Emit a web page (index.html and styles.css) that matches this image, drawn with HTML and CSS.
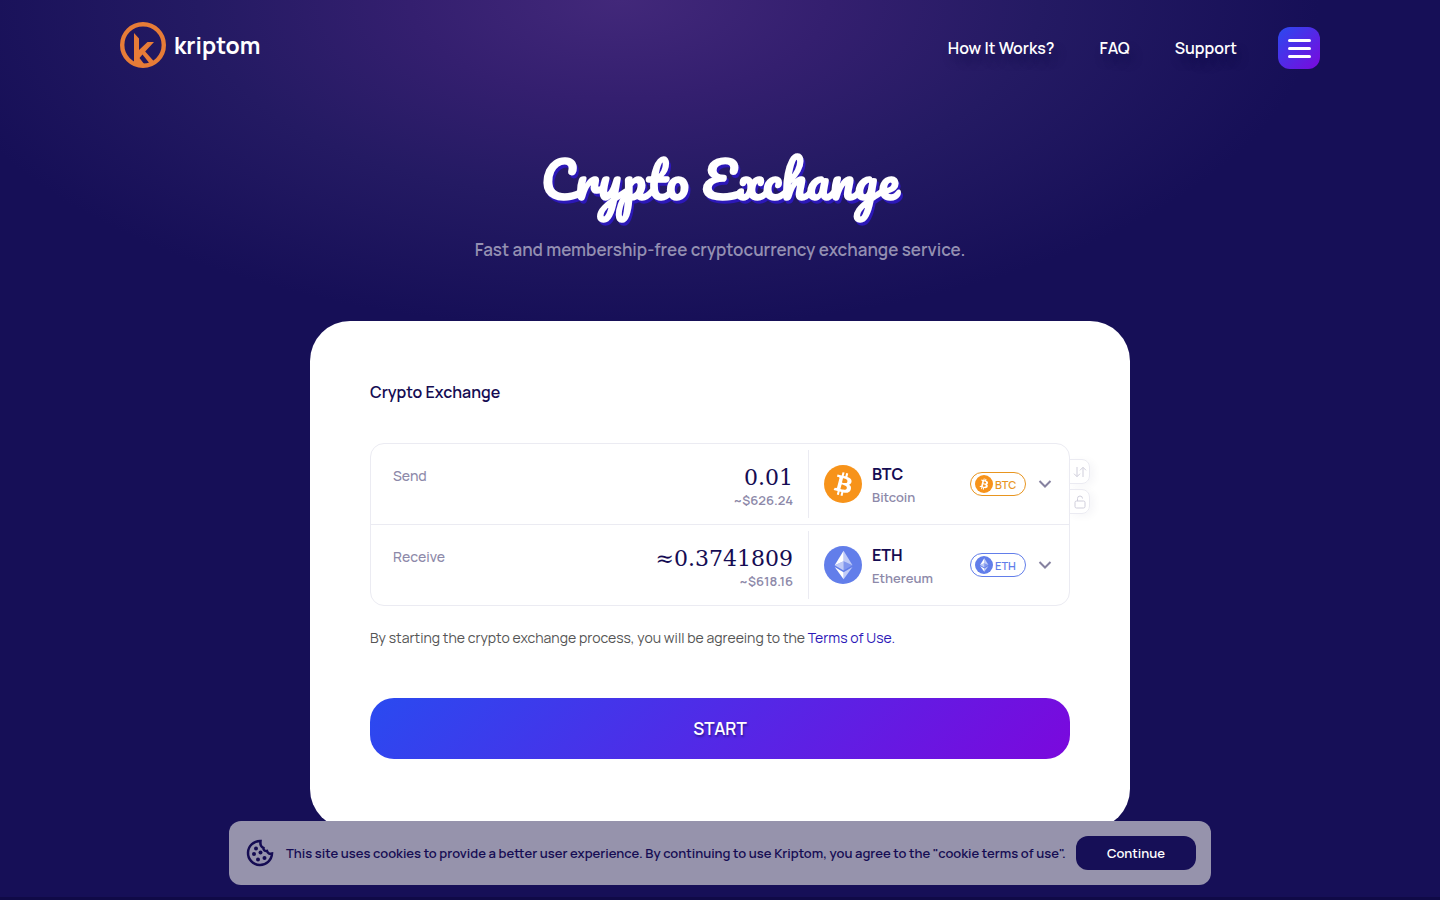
FILE: index.html
```
<!DOCTYPE html>
<html lang="en">

<head>
  <meta charset="UTF-8">
  <meta name="viewport" content="width=device-width, initial-scale=1.0">
  <title>Kriptom - Crypto Exchange</title>
  <link rel="stylesheet" href="styles.css">
</head>

<body>
  <!-- shared coin symbols -->
  <svg class="sprite" aria-hidden="true">
    <symbol id="btc" viewBox="0 0 32 32">
      <circle cx="16" cy="16" r="16" fill="#f7931a" />
      <path fill="#fff" d="M23.2 14c.3-2.100-1.300-3.300-3.500-4l.7-2.900-1.700-.4-.7 2.800-1.400-.3.700-2.800-1.700-.4-.7 2.800-3.500-.9-.5 1.900 1.300.3c.7.200.8.600.8 1l-2 7.900c-.1.200-.3.500-.8.400l-1.200-.3-.9 2 3.400.8-.7 2.900 1.700.4.7-2.800 1.400.4-.7 2.800 1.700.4.7-2.900c3 .6 5.200.3 6.200-2.300.7-2.200 0-3.400-1.600-4.200 1.100-.3 2-1 2.300-2.600zm-4 5.600c-.5 2.200-4.200 1-5.400.7l1-3.900c1.200.3 5 .9 4.400 3.200zm.5-5.600c-.5 2-3.600 1-4.600.7l.9-3.500c1 .2 4.200.7 3.700 2.800z" />
    </symbol>
    <symbol id="eth" viewBox="0 0 32 32">
      <circle cx="16" cy="16" r="16" fill="#627eea" />
      <g fill="#fff">
        <path opacity=".6" d="M16.500 4v8.900l7.500 3.300z" />
        <path d="M16.500 4L9 16.200l7.500-3.300z" />
        <path opacity=".6" d="M16.500 22v6l7.500-10.400z" />
        <path d="M16.500 28v-6L9 17.600z" />
        <path opacity=".2" d="M16.500 20.600l7.500-4.400-7.500-3.300z" />
        <path opacity=".6" d="M9 16.200l7.500 4.400v-7.700z" />
      </g>
    </symbol>
  </svg>

  <div class="hero">
    <header class="header container">
      <a class="logo" href="#">
        <svg width="46" height="46" viewBox="0 0 46 46">
          <circle cx="23" cy="23" r="20.800" fill="none" stroke="#e77c37" stroke-width="4.400" />
          <path fill="#e77c37" d="M14 11l5 5.500v11.500l8.500-8h6.500l-8.800 9.500 9.300 10.500-4.500 2-7.500-9.500-3 3.500 5 6.500H14z" />
        </svg>
        <span class="logo-text">kriptom</span>
      </a>
      <nav class="nav">
        <a href="#how">How It Works?</a>
        <a href="#faq">FAQ</a>
        <a href="#support">Support</a>
        <button class="menu-btn" type="button" aria-label="Menu">
          <span></span>
          <span></span>
          <span></span>
        </button>
      </nav>
    </header>

    <main>
      <h1 class="title">Crypto Exchange</h1>
      <p class="subtitle">Fast and membership-free cryptocurrency exchange service.</p>

      <form class="card">
        <h2 class="card-title">Crypto Exchange</h2>

        <div class="exchange">
          <div class="row">
            <div class="amount">
              <label for="send">Send</label>
              <div class="amount-value">
                <input id="send" type="text" value="0.01">
                <span>~$626.24</span>
              </div>
            </div>
            <button class="coin" type="button">
              <svg class="coin-icon"><use href="#btc" /></svg>
              <span class="coin-name"><b>BTC</b><small>Bitcoin</small></span>
              <span class="pill pill-btc"><svg><use href="#btc" /></svg>BTC</span>
              <svg class="chevron" viewBox="0 0 14 8"><path d="M1.500 1L7 6.500l5.500-5.500" /></svg>
            </button>
          </div>
          <div class="row">
            <div class="amount">
              <label for="receive">Receive</label>
              <div class="amount-value">
                <input id="receive" type="text" value="≈0.3741809" readonly>
                <span>~$618.16</span>
              </div>
            </div>
            <button class="coin" type="button">
              <svg class="coin-icon"><use href="#eth" /></svg>
              <span class="coin-name"><b>ETH</b><small>Ethereum</small></span>
              <span class="pill pill-eth"><svg><use href="#eth" /></svg>ETH</span>
              <svg class="chevron" viewBox="0 0 14 8"><path d="M1.500 1L7 6.500l5.500-5.500" /></svg>
            </button>
          </div>

          <div class="side">
            <button type="button" aria-label="Swap">
              <svg viewBox="0 0 14 14"><path d="M4 2v9.500M1 8.700l3 3 3-3M10 12V2.500M7 5.300l3-3 3 3" /></svg>
            </button>
            <button type="button" aria-label="Lock rate">
              <svg viewBox="0 0 14 14"><path d="M3.500 6h7q1.500 0 1.500 1.500v4q0 1.500-1.500 1.500h-7Q2 13 2 11.500v-4Q2 6 3.500 6zM4.500 6V3.500a2.500 2.500 0 0 1 5 0" /></svg>
            </button>
          </div>
        </div>

        <p class="terms">By starting the crypto exchange process, you will be agreeing to the <a href="#terms">Terms of Use.</a></p>
        <button class="start" type="button">START</button>
      </form>
    </main>
  </div>

  <section class="next"></section>

  <div class="cookie">
    <svg class="cookie-icon" viewBox="0 0 28 28">
      <path d="M14.500 2A12 12 0 1 0 26 14.500c-2.500.6-4.500-.4-5-2.500-2.200.3-3.800-1-3.500-3-2.400-1-3.500-3.500-3-7z" />
      <g>
        <circle cx="10" cy="9.500" r="2" />
        <circle cx="8" cy="15" r="2" />
        <circle cx="14.500" cy="13.500" r="2" />
        <circle cx="12" cy="20.500" r="2" />
        <circle cx="18.500" cy="19" r="2" />
      </g>
    </svg>
    <p>This site uses cookies to provide a better user experience. By continuing to use Kriptom, you agree to the "cookie terms of use".</p>
    <button type="button">Continue</button>
  </div>
</body>

</html>
```
FILE: styles.css
```
* {
  box-sizing: border-box;
  margin: 0;
  padding: 0;
}

body {
  font-family: Manrope, Inter, sans-serif;
  font-weight: 600;
  background-color: #160f57;
  color: #150c53;
}

a {
  color: inherit;
  text-decoration: none;
}

button,
input {
  font: inherit;
  color: inherit;
  border: none;
  background: none;
}

button {
  cursor: pointer;
}

.sprite {
  display: none;
}

.hero {
  padding: 0 20px 68px;
  background: radial-gradient(ellipse 700px 330px at 43% 0, #42287a, #341f6f 30%, #241a63 60%, #160f57);
}

.container {
  max-width: 1200px;
  margin: 0 auto;
}

/* header */
.header {
  display: flex;
  justify-content: space-between;
  height: 96px;
}

.logo {
  display: flex;
  align-items: center;
  gap: 8px;
  height: 90px;
  color: #fff;
}

.logo-text {
  font-size: 23px;
  font-weight: 700;
}

.nav {
  display: flex;
  align-items: center;
  gap: 45px;
  color: #fff;
  font-size: 16px;
  text-shadow: 4px 8px 10px rgba(10, 5, 60, .4);
}

.menu-btn {
  display: flex;
  flex-direction: column;
  justify-content: center;
  align-items: center;
  gap: 5px;
  width: 42px;
  height: 42px;
  margin-left: -4px;
  border-radius: 12px;
  background: linear-gradient(135deg, #2a4af0, #7b08dd);
}

.menu-btn span {
  width: 23px;
  height: 3px;
  border-radius: 2px;
  background-color: #fff;
}

/* title */
.title {
  margin-top: 38px;
  color: #fff;
  font-family: Pacifico, Lato, sans-serif;
  font-size: 50px;
  font-weight: 700;
  line-height: 90px;
  text-align: center;
  text-shadow: 2px 3px 0 #2c18b8;
}

.subtitle {
  margin-top: 14px;
  color: #9490b2;
  font-size: 17px;
  line-height: 24px;
  text-align: center;
}

/* card */
.card {
  max-width: 820px;
  margin: 59px auto 0;
  padding: 59px 60px 70px;
  border-radius: 40px;
  background-color: #fff;
}

.card-title {
  font-size: 16px;
  font-weight: 600;
  line-height: 24px;
}

.exchange {
  position: relative;
  margin-top: 39px;
  border: 1px solid #ebebf2;
  border-radius: 14px;
}

.row {
  display: flex;
  height: 80px;
}

.row + .row {
  height: 81px;
  border-top: 1px solid #ebebf2;
}

.amount {
  flex: 1;
  display: flex;
  justify-content: space-between;
  margin: 6px 0;
  padding: 14px 15px 0 22px;
  border-right: 1px solid #ebebf2;
  color: #8d89a9;
}

.amount label {
  font-size: 14px;
  line-height: 24px;
  font-weight: 500;
}

.amount-value {
  display: flex;
  flex-direction: column;
  align-items: flex-end;
}

.amount-value input {
  width: 200px;
  height: 27px;
  color: #150c53;
  font-family: "DejaVu Serif", serif;
  font-size: 22px;
  font-weight: 400;
  text-align: right;
  outline: none;
}

.amount-value span {
  font-size: 13px;
  line-height: 18px;
}

.coin {
  display: flex;
  align-items: center;
  width: 260px;
  padding: 0 17px 0 15px;
  text-align: left;
}

.coin-icon {
  width: 38px;
  height: 38px;
}

.coin-name {
  flex: 1;
  margin-left: 10px;
  padding-top: 4px;
}

.coin-name b,
.coin-name small {
  display: block;
  line-height: 23px;
}

.coin-name b {
  font-size: 16px;
  font-weight: 700;
}

.coin-name small {
  color: #8d89a9;
  font-size: 13px;
}

.pill {
  display: flex;
  align-items: center;
  gap: 2px;
  width: 56px;
  height: 24px;
  padding-left: 4px;
  border: 1px solid;
  border-radius: 12px;
  font-size: 11px;
}

.pill svg {
  width: 18px;
  height: 18px;
}

.pill-btc {
  color: #e8951f;
}

.pill-eth {
  color: #627eea;
}

.chevron {
  width: 14px;
  height: 8px;
  margin-left: 12px;
  fill: none;
  stroke: #8682a0;
  stroke-width: 2;
}

/* tabs hanging off the right edge */
.side {
  position: absolute;
  top: 15px;
  left: 100%;
  display: flex;
  flex-direction: column;
  gap: 5px;
}

.side button {
  display: flex;
  align-items: center;
  justify-content: center;
  width: 21px;
  height: 25px;
  border: 1px solid #ebebf2;
  border-radius: 0 8px 8px 0;
  box-shadow: 4px 2px 8px rgba(21, 12, 83, .04);
}

.side svg {
  flex: none;
  width: 14px;
  height: 14px;
  fill: none;
  stroke: #cfcedb;
}

.terms {
  margin-top: 20px;
  color: #555;
  font-size: 14px;
  font-weight: 400;
  line-height: 24px;
}

.terms a {
  color: #2c18b8;
}

.start {
  display: block;
  width: 100%;
  height: 61px;
  margin-top: 48px;
  border-radius: 24px;
  background: linear-gradient(135deg, #2a4af0, #7b08dd);
  color: #fff;
  font-size: 17px;
  text-shadow: 1px 2px 2px rgba(21, 12, 83, .5);
}

.next {
  height: 400px;
  background-color: #100a47;
}

/* cookie bar */
.cookie {
  position: fixed;
  bottom: 15px;
  left: 50%;
  transform: translateX(-50%);
  display: flex;
  align-items: center;
  width: 982px;
  max-width: 96%;
  height: 64px;
  padding: 0 15px 0 17px;
  border-radius: 12px;
  background-color: #9693ac;
  font-size: 13px;
}

.cookie p {
  flex: 1;
  margin-left: 12px;
}

.cookie button {
  width: 120px;
  height: 34px;
  border-radius: 12px;
  background-color: #160f57;
  color: #fff;
}

.cookie-icon {
  width: 28px;
  height: 28px;
  fill: none;
  stroke: #150c53;
  stroke-width: 2.500;
}

.cookie-icon g {
  fill: #150c53;
  stroke: none;
}
```
